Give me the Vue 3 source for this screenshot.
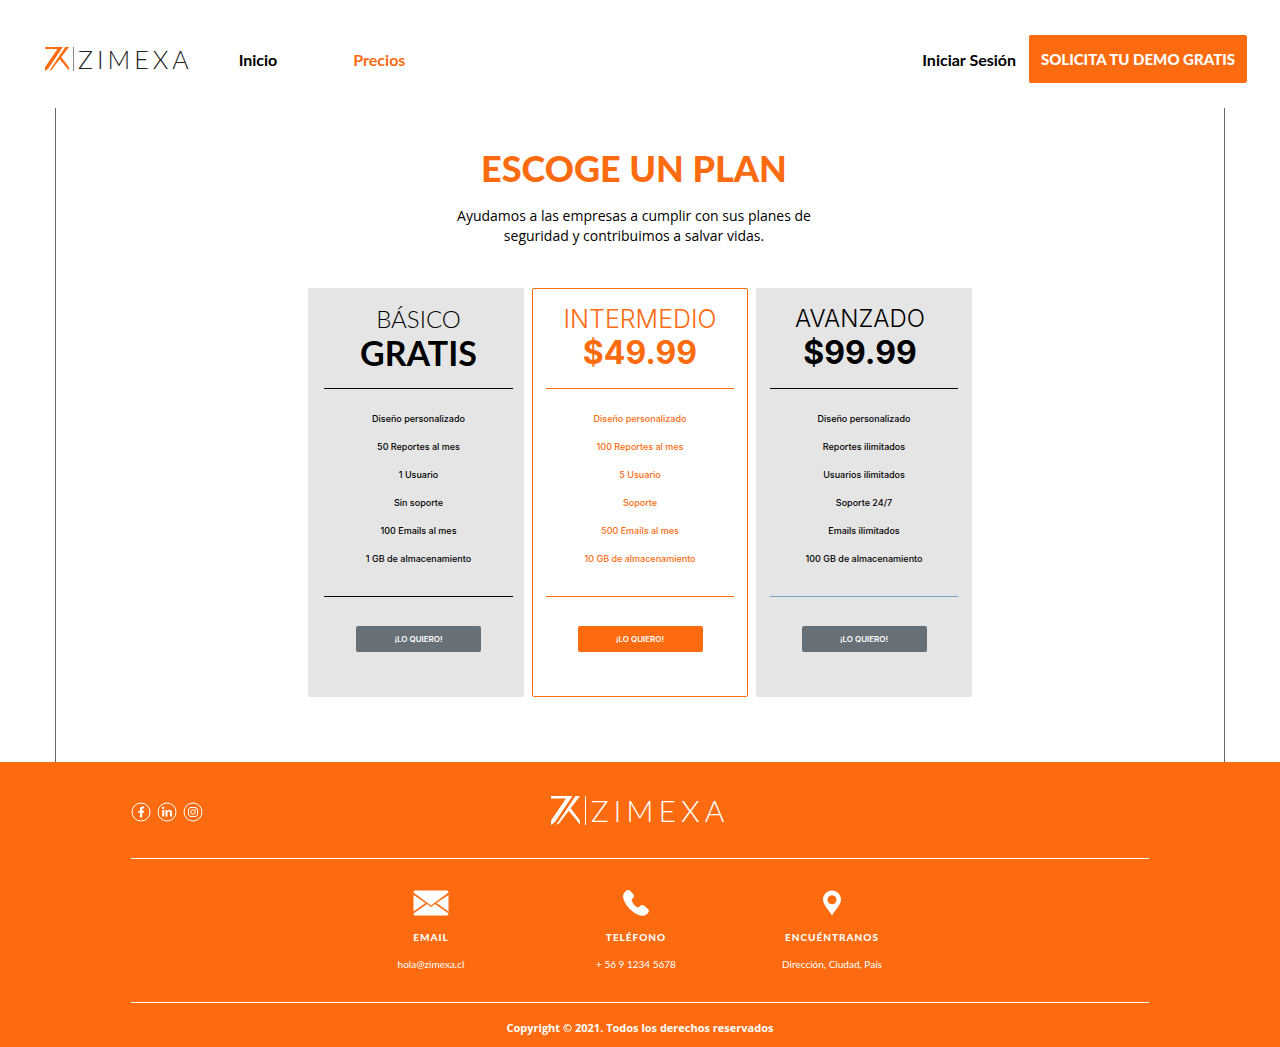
<script setup>
const plans = [
  {
    id: 'basic',
    name: 'BÁSICO',
    price: 'GRATIS',
    features: [
      'Diseño personalizado',
      '50 Reportes al mes',
      '1 Usuario',
      'Sin soporte',
      '100 Emails al mes',
      '1 GB de almacenamiento',
    ],
  },
  {
    id: 'medium',
    name: 'INTERMEDIO',
    price: '$49.99',
    features: [
      'Diseño personalizado',
      '100 Reportes al mes',
      '5 Usuario',
      'Soporte',
      '500 Emails al mes',
      '10 GB de almacenamiento',
    ],
  },
  {
    id: 'advanced',
    name: 'AVANZADO',
    price: '$99.99',
    features: [
      'Diseño personalizado',
      'Reportes ilimitados',
      'Usuarios ilimitados',
      'Soporte 24/7',
      'Emails ilimitados',
      '100 GB de almacenamiento',
    ],
  },
]
</script>

<template>
  <div class="page">
    <header class="topbar">
      <a href="#" class="logo" aria-label="Zimexa">
        <svg class="logo-mark" viewBox="0 0 29 29" aria-hidden="true">
          <path d="M0 0H21.500L4 26L0 29V24.500L15 2.500H0Z" />
          <path d="M24.500 0H29L8.500 27L5 29Z" />
          <path d="M17.500 14.500L19.500 12L29 24.500V28.500Z" />
        </svg>
        <span class="logo-bar"></span>
        <span class="logo-word">ZIMEXA</span>
      </a>
      <nav class="nav">
        <a href="#">Inicio</a>
        <a href="#" class="active">Precios</a>
      </nav>
      <div class="actions">
        <a href="#">Iniciar Sesión</a>
        <button type="button" class="demo">SOLICITA TU DEMO GRATIS</button>
      </div>
    </header>

    <main class="main">
      <div class="heading">
        <h1>ESCOGE UN PLAN</h1>
        <p class="intro">Ayudamos a las empresas a cumplir con sus planes de seguridad y contribuimos a salvar vidas.</p>
      </div>

      <div class="plans">
        <section v-for="plan in plans" :key="plan.id" class="plan" :class="plan.id">
          <div class="plan-head">
            <h2>{{ plan.name }}</h2>
            <p class="price">{{ plan.price }}</p>
          </div>
          <ul>
            <li v-for="feature in plan.features" :key="feature">{{ feature }}</li>
          </ul>
          <button type="button" class="want">¡LO QUIERO!</button>
        </section>
      </div>
    </main>

    <footer class="footer">
      <div class="footer-top">
        <div class="social">
          <a href="#" aria-label="Facebook">
            <svg viewBox="0 0 20 20">
              <circle cx="10" cy="10" r="9" class="ring" />
              <path d="M9 15.500V10.800H7.200V8.700H9V7.200C9 5.300 10 4.400 11.700 4.400H13.200V6.400H12.200C11.400 6.400 11.200 6.800 11.200 7.400V8.700H13.200L12.900 10.800H11.200V15.500Z" />
            </svg>
          </a>
          <a href="#" aria-label="LinkedIn">
            <svg viewBox="0 0 20 20">
              <circle cx="10" cy="10" r="9" class="ring" />
              <circle cx="6.200" cy="5.900" r="1.200" />
              <path d="M5.200 8H7.200V14.500H5.200ZM8.500 8H10.400V8.900C11.800 7.200 15 7.500 15 10.600V14.500H13V11C13 9 10.500 9.100 10.500 11V14.500H8.500Z" />
            </svg>
          </a>
          <a href="#" aria-label="Instagram">
            <svg viewBox="0 0 20 20">
              <circle cx="10" cy="10" r="9" class="ring" />
              <rect x="5.500" y="5.500" width="9" height="9" rx="2.500" class="ring" />
              <circle cx="10" cy="10" r="2.200" class="ring" />
              <circle cx="12.600" cy="7.400" r="0.600" />
            </svg>
          </a>
        </div>
        <a href="#" class="logo large" aria-label="Zimexa">
          <svg class="logo-mark" viewBox="0 0 29 29" aria-hidden="true">
            <path d="M0 0H21.500L4 26L0 29V24.500L15 2.500H0Z" />
            <path d="M24.500 0H29L8.500 27L5 29Z" />
            <path d="M17.500 14.500L19.500 12L29 24.500V28.500Z" />
          </svg>
          <span class="logo-bar"></span>
          <span class="logo-word">ZIMEXA</span>
        </a>
      </div>

      <div class="contacts">
        <div class="contact">
          <svg viewBox="0 0 36 26" width="36" height="26" aria-hidden="true">
            <path d="M2 0.500H34Q35.500 0.500 35.500 2.500L18 15.500L0.500 2.500Q0.500 0.500 2 0.500Z" />
            <path d="M0.500 5L12.500 13L0.500 21.500ZM35.500 5L23.500 13L35.500 21.500Z" />
            <path d="M14 14L18 17L22 14L35.500 23.500Q35.500 25.500 34 25.500H2Q0.500 25.500 0.500 23.500Z" />
          </svg>
          <h3>EMAIL</h3>
          <p>hola@zimexa.cl</p>
        </div>
        <div class="contact">
          <svg viewBox="0 0 26 26" width="26" height="26" aria-hidden="true">
            <path d="M1.500 2.500L3.500 0.500Q5.500 -0.700 7.200 0.800L10.300 4.200Q11.700 5.800 10.500 7.500L9 9.200Q8.400 10 8.800 11Q10.500 15.300 14.200 17.300Q15.200 17.700 16 17L18 15.300Q19.700 14.500 21.200 15.700L25 19Q26.600 20.500 25.500 22.200L24 24Q22 26.200 18.500 25.800Q13 24.700 7 19.200Q0.800 13 0 6.500Q0 3.800 1.500 2.500Z" />
          </svg>
          <h3>TELÉFONO</h3>
          <p>+ 56 9 1234 5678</p>
        </div>
        <div class="contact">
          <svg viewBox="0 0 18 26" width="18" height="26" aria-hidden="true">
            <path fill-rule="evenodd" d="M9 0.500C14 0.500 18 4.500 18 9.500C18 15 12 20 9 25.500C6 20 0 15 0 9.500C0 4.500 4 0.500 9 0.500ZM9 5.200A4.500 4.500 0 1 0 9 14.200A4.500 4.500 0 1 0 9 5.200Z" />
          </svg>
          <h3>ENCUÉNTRANOS</h3>
          <p>Dirección, Ciudad, País</p>
        </div>
      </div>

      <p class="copyright">Copyright © 2021. Todos los derechos reservados</p>
    </footer>
  </div>
</template>

<style>
body {
  background: #fff;
}
</style>

<style scoped>
.page {
  font-family: Lato, sans-serif;
  color: #000;
}

h1,
h2,
h3,
p,
ul {
  margin: 0;
  padding: 0;
}

a {
  color: inherit;
  text-decoration: none;
}

button {
  border: 0;
  border-radius: 2px;
  color: #fff;
  font-family: inherit;
  cursor: pointer;
}

.topbar {
  display: flex;
  align-items: center;
  height: 48px;
  padding: 35px 33px 25px 45px;
  font-size: 16px;
  font-weight: 700;
}

.logo {
  display: flex;
  align-items: center;
  gap: 4px;
  color: #222;
}

.logo-mark {
  width: 24px;
  height: 24px;
  fill: #fd6b10;
}

.logo-bar {
  width: 1px;
  height: 24px;
  background: #888;
}

.logo-word {
  font-size: 25px;
  line-height: 24px;
  font-weight: 300;
  letter-spacing: 4px;
}

.nav {
  display: flex;
  gap: 76px;
  margin-left: 46px;
}

.active {
  color: #fd6b10;
}

.actions {
  display: flex;
  align-items: center;
  gap: 13px;
  margin-left: auto;
}

.demo {
  width: 218px;
  height: 48px;
  padding: 0;
  background: #fd6b10;
  font-size: 15px;
  font-weight: 900;
}

.main {
  display: flex;
  flex-direction: column;
  align-items: center;
  margin: 0 55px;
  padding: 36px 0 65px;
  border: solid #666;
  border-width: 0 1px;
}

.heading {
  display: flex;
  flex-direction: column;
  align-items: center;
  padding-right: 12px;
}

h1 {
  color: #fd6b10;
  font-size: 36px;
  line-height: 48px;
  font-weight: 900;
}

.intro {
  width: 370px;
  margin-top: 14px;
  font-family: "Open Sans", sans-serif;
  font-size: 14px;
  line-height: 20px;
  text-align: center;
}

.plans {
  display: flex;
  gap: 8px;
  margin-top: 42px;
}

.plan {
  box-sizing: border-box;
  width: 216px;
  padding: 14px 13px 44px;
  border: 1px solid #e5e5e5;
  border-radius: 2px;
  background: #e5e5e5;
  font-family: Inter, sans-serif;
  text-align: center;
}

.plan-head {
  padding-bottom: 17px;
  border-bottom: 1px solid currentColor;
}

h2 {
  font-size: 24px;
  line-height: 32px;
  font-weight: 300;
}

.price {
  font-size: 32px;
  line-height: 36px;
  font-weight: 700;
}

ul {
  padding: 16px 0 23px;
  border-bottom: 1px solid currentColor;
  list-style: none;
}

li {
  font-size: 9px;
  line-height: 28px;
  font-weight: 500;
}

.want {
  width: 125px;
  height: 26px;
  margin-top: 29px;
  padding: 0;
  background: #687077;
  font-size: 8px;
  font-weight: 600;
}

.basic {
  padding-right: 10px;
  padding-left: 15px;
}

.basic .plan-head {
  font-family: Lato, sans-serif;
}

.basic .price {
  font-size: 34px;
}

.medium {
  border-color: #fd6b10;
  background: #fff;
  color: #fd6b10;
}

.medium h2 {
  font-size: 25px;
}

.medium .want {
  background: #fd6b10;
}

.advanced .plan-head {
  padding-right: 8px;
}

.advanced ul {
  border-bottom-color: #6fa3c7;
}

.footer {
  padding: 0 131px 11px;
  background: #fd6b10;
  color: #fff;
}

.footer-top {
  display: grid;
  grid-template-columns: 1fr auto 1fr;
  align-items: center;
  height: 96px;
  border-bottom: 1px solid #fff;
}

.social {
  display: flex;
  gap: 6px;
  padding-top: 4px;
}

.social svg {
  display: block;
  width: 20px;
  height: 20px;
  fill: #fff;
}

.social .ring {
  fill: none;
  stroke: #fff;
  stroke-width: 1;
}

.large {
  gap: 5px;
  color: #fff;
}

.large .logo-mark {
  width: 29px;
  height: 29px;
  fill: #fff;
}

.large .logo-bar {
  height: 29px;
  background: #fff;
}

.large .logo-word {
  font-size: 30px;
  line-height: 32px;
  letter-spacing: 5px;
}

.contacts {
  display: grid;
  grid-template-columns: 206px 204px 188px;
  justify-content: center;
  height: 112px;
  padding: 31px 26px 0 0;
  border-bottom: 1px solid #fff;
}

.contact {
  display: flex;
  flex-direction: column;
  align-items: center;
}

.contact svg {
  fill: #fff;
}

h3 {
  margin-top: 13px;
  font-size: 10px;
  line-height: 16px;
  font-weight: 900;
  letter-spacing: 1px;
}

.contact p {
  margin-top: 11px;
  font-size: 10px;
  line-height: 16px;
}

.copyright {
  padding-top: 17px;
  font-family: "Open Sans", sans-serif;
  font-size: 11px;
  line-height: 16px;
  font-weight: 700;
  text-align: center;
}
</style>
